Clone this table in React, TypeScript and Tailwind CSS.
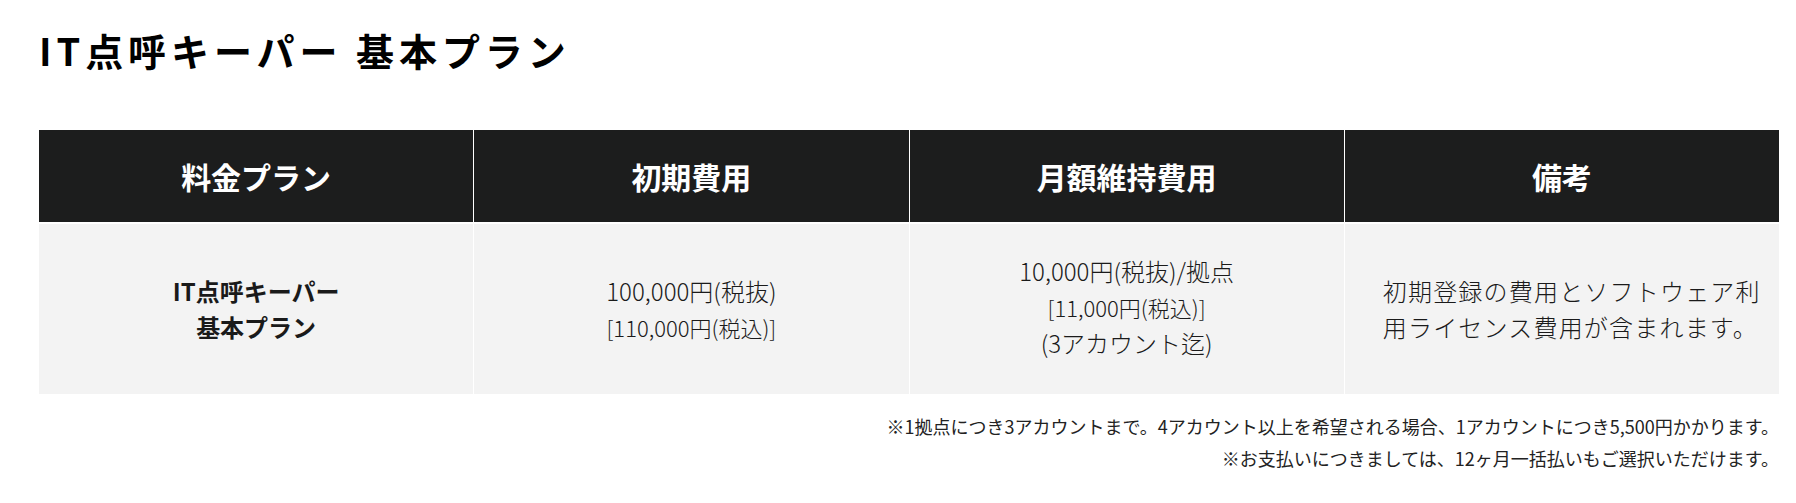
import React from 'react';

const headers = ['料金プラン', '初期費用', '月額維持費用', '備考'];

const App = () => {
  return (
    <div className="h-[503px] w-[1796px] bg-white pl-[39px] pr-[17px] font-['Noto_Sans_CJK_JP',sans-serif] text-[#1a1a1a]">
      {/* Title */}
      <h1 className="pt-[22px] text-[38px] font-bold leading-[56px] tracking-[0.13em] text-black">
        IT点呼キーパー 基本プラン
      </h1>

      {/* Price table */}
      <div className="mt-[52px] grid w-[1740px] grid-cols-4 gap-x-px gap-y-[2px]">
        {headers.map((h) => (
          <div
            key={h}
            className="flex h-[92px] items-center justify-center bg-[#1c1d1d] text-[30px] font-bold text-white"
          >
            {h}
          </div>
        ))}

        <div className="flex h-[170px] items-center justify-center bg-[#f3f3f3] text-center text-[24px] font-bold leading-[36px]">
          <p>
            IT点呼キーパー
            <br />
            基本プラン
          </p>
        </div>

        <div className="flex h-[170px] items-center justify-center bg-[#f3f3f3] text-center text-[24px] font-light leading-[36px]">
          <div>
            <p>100,000円(税抜)</p>
            <p className="text-[22px]">[110,000円(税込)]</p>
          </div>
        </div>

        <div className="flex h-[170px] items-center justify-center bg-[#f3f3f3] text-center text-[24px] font-light leading-[36px]">
          <div className="-mt-[4px]">
            <p>10,000円(税抜)/拠点</p>
            <p className="text-[22px]">[11,000円(税込)]</p>
            <p>(3アカウント迄)</p>
          </div>
        </div>

        <div className="flex h-[170px] items-center bg-[#f3f3f3] pl-[38px] pr-[18px] text-[24px] font-light leading-[36px] tracking-[0.05em]">
          <p className="whitespace-nowrap">
            初期登録の費用とソフトウェア利
            <br />
            用ライセンス費用が含まれます。
          </p>
        </div>
      </div>

      {/* Notes */}
      <div className="mt-[16px] w-[1740px] text-right text-[18px] leading-[32px] text-[#222]">
        <p>※1拠点につき3アカウントまで。4アカウント以上を希望される場合、1アカウントにつき5,500円かかります。</p>
        <p>※お支払いにつきましては、12ヶ月一括払いもご選択いただけます。</p>
      </div>
    </div>
  );
};

export default App;
